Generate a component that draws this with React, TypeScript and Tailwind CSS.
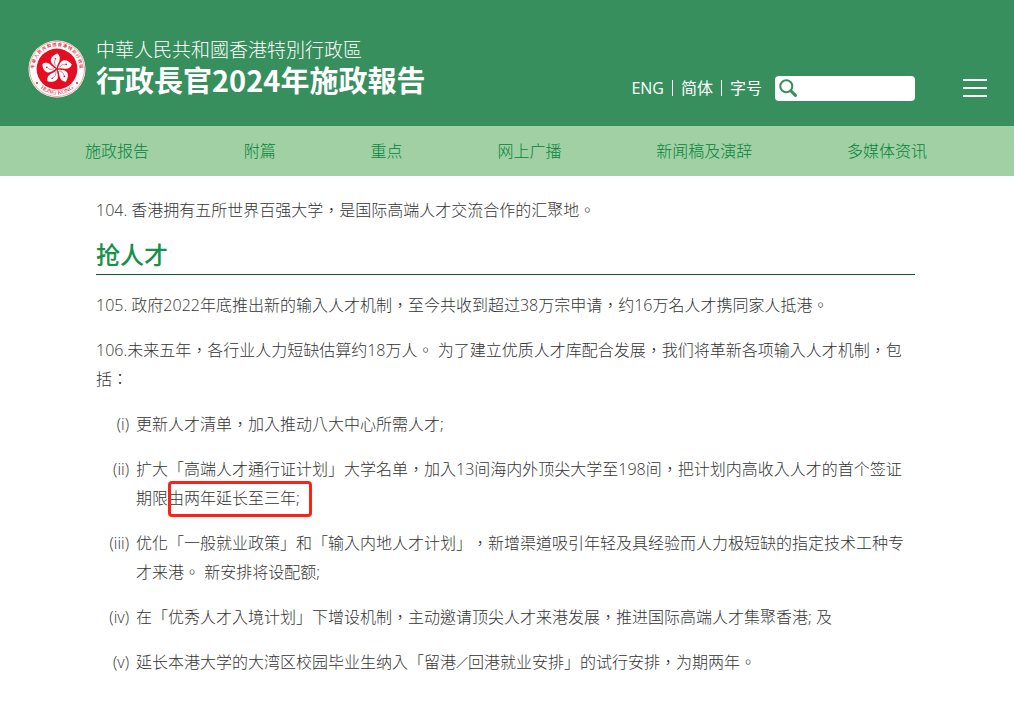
import type { ReactNode } from "react";

const navItems = ["施政报告", "附篇", "重点", "网上广播", "新闻稿及演辞", "多媒体资讯"];

const petal =
  "M0 -1 C-1.6 -3 -5.4 -6.2 -4.6 -9.4 C-4 -12.4 -0.6 -14.6 3 -15.2 C5.2 -13.2 5.2 -9.8 3.6 -7.2 C2.4 -5.2 0.8 -4 0 -1 Z";

function Emblem() {
  return (
    <svg viewBox="-29 -29 58 58" className="size-[58px] shrink-0" role="img" aria-label="香港特別行政區區徽">
      <circle r="28.5" fill="#fff" />
      <circle r="27.5" fill="none" stroke="#e60d20" strokeWidth="0.4" />
      <circle r="20.4" fill="#e60d20" />
      <defs>
        <path id="ring-top" d="M-20.2 10.8 A22.9 22.9 0 1 1 20.2 10.8" />
        <path id="ring-bottom" d="M-21 14.4 A25.5 25.5 0 0 0 21 14.4" />
      </defs>
      <text fill="#e60d20" fontSize="4.2" fontWeight="500" fontFamily="Noto Sans CJK TC, sans-serif">
        <textPath href="#ring-top" startOffset="50%" textAnchor="middle">
          中 華 人 民 共 和 國 香 港 特 別 行 政 區
        </textPath>
      </text>
      <text fill="#e60d20" fontSize="6" fontFamily="Liberation Serif, serif">
        <textPath href="#ring-bottom" startOffset="50%" textAnchor="middle">
          HONG KONG
        </textPath>
      </text>
      <circle cx="-20" cy="14" r="0.9" fill="#e60d20" />
      <circle cx="20" cy="14" r="0.9" fill="#e60d20" />
      {[-10, 62, 134, 206, 278].map((angle) => (
        <g key={angle} transform={`rotate(${angle})`}>
          <path d={petal} fill="#fff" />
          <path d="M0 -3 C-1.6 -5 -1.8 -7.4 -0.2 -9.6" fill="none" stroke="#e60d20" strokeWidth="0.5" />
          <circle cx="0.2" cy="-10.4" r="0.8" fill="#e60d20" />
        </g>
      ))}
    </svg>
  );
}

function Item({ label, children }: { label: string; children: ReactNode }) {
  return (
    <li className="flex gap-[7px]">
      <span className="w-[33px] shrink-0 text-right whitespace-nowrap">{label}</span>
      <p className="min-w-0 flex-1">{children}</p>
    </li>
  );
}

export default function App() {
  return (
    <div className="bg-white font-['Open_Sans','Noto_Sans_CJK_TC',sans-serif] text-base [text-spacing-trim:space-all]">
      <header className="flex h-[126px] items-center bg-[#378f5d] pr-[27px] pl-7 text-white">
        <a href="#home" className="flex items-center gap-[10px] pt-[11px]">
          <Emblem />
          <span className="flex flex-col pb-[3px] font-['Noto_Sans_CJK_TC',sans-serif] whitespace-nowrap">
            <span className="text-[19px] leading-6 font-light">中華人民共和國香港特別行政區</span>
            <span className="text-[29px] leading-9 font-bold">行政長官2024年施政報告</span>
          </span>
        </a>
        <div className="ml-auto flex items-center pt-[50px]">
          <a href="#eng" className="pr-2 leading-4">ENG</a>
          <a href="#sc" className="border-l border-white px-2 leading-4">简体</a>
          <a href="#size" className="border-l border-white pr-[13px] pl-2 leading-4">字号</a>
          <label className="flex h-[25px] w-[140px] items-center rounded bg-white pl-1">
            <svg viewBox="0 0 18 18" className="size-[18px] shrink-0" fill="none" stroke="#378f5d" aria-hidden="true">
              <circle cx="7.3" cy="7.3" r="6" strokeWidth="2" />
              <path d="M11.8 11.8 L16.4 16.4" strokeWidth="3" strokeLinecap="round" />
            </svg>
            <input type="search" aria-label="搜寻" className="min-w-0 flex-1 bg-transparent px-1 text-sm text-[#333] outline-none" />
          </label>
          <button type="button" aria-label="选单" className="ml-12 flex w-6 flex-col gap-[6px]">
            <span className="h-[2px] bg-white" />
            <span className="h-[2px] bg-white" />
            <span className="h-[2px] bg-white" />
          </button>
        </div>
      </header>

      <nav className="flex h-[50px] items-center justify-between bg-[#a0d0a4] pr-[87px] pl-[85px] font-light text-[#00843a]">
        {navItems.map((item) => (
          <a key={item} href="#nav">{item}</a>
        ))}
      </nav>

      <main className="flex flex-col gap-4 pt-5 pr-[99px] pb-6 pl-24 leading-[29px] font-light text-[#333]">
        <p>104. 香港拥有五所世界百强大学，是国际高端人才交流合作的汇聚地。</p>
        <h2 className="border-b border-[#0c5a2c] pb-[5px] text-2xl leading-7 font-medium text-[#16904a]">抢人才</h2>
        <p>105. 政府2022年底推出新的输入人才机制，至今共收到超过38万宗申请，约16万名人才携同家人抵港。</p>
        <p>106.未来五年，各行业人力短缺估算约18万人。 为了建立优质人才库配合发展，我们将革新各项输入人才机制，包括：</p>
        <ul className="flex flex-col gap-4">
          <Item label="(i)">更新人才清单，加入推动八大中心所需人才;</Item>
          <Item label="(ii)">
            扩大「高端人才通行证计划」大学名单，加入13间海内外顶尖大学至198间，把计划内高收入人才的首个签证期限
            <span className="relative">
              由两年延长至三年;
              <span className="absolute -top-1.5 -right-3 -bottom-2 left-0 rounded-sm border-[3px] border-[#fb2216]" />
            </span>
          </Item>
          <Item label="(iii)">
            优化「一般就业政策」和「输入内地人才计划」，新增渠道吸引年轻及具经验而人力极短缺的指定技术工种专才来港。 新安排将设配额;
          </Item>
          <Item label="(iv)">在「优秀人才入境计划」下增设机制，主动邀请顶尖人才来港发展，推进国际高端人才集聚香港; 及</Item>
          <Item label="(v)">
            延长本港大学的大湾区校园毕业生纳入「留港<span className="font-['Noto_Sans_CJK_TC',sans-serif] text-xs leading-none font-medium">∕</span>回港就业安排」的试行安排，为期两年。
          </Item>
        </ul>
      </main>
    </div>
  );
}
